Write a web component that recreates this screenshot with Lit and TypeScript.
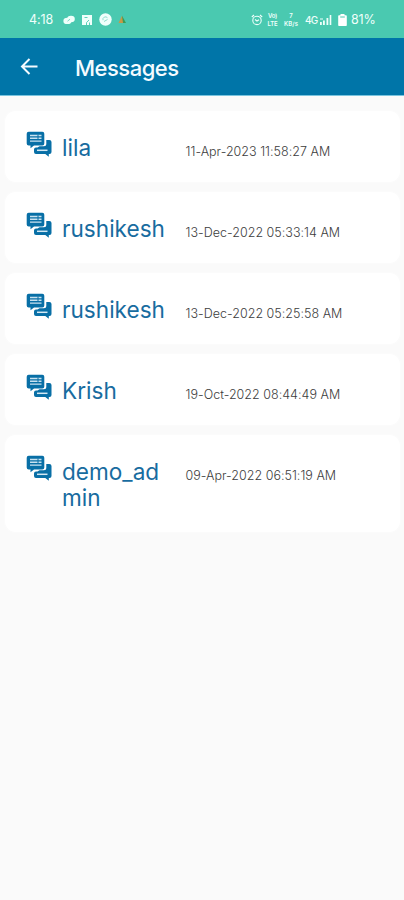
import { LitElement, html, css } from "lit";
import { customElement, property } from "lit/decorators.js";

interface Message {
  name: string;
  date: string;
}

const MESSAGES: Message[] = [
  { name: "lila", date: "11-Apr-2023 11:58:27 AM" },
  { name: "rushikesh", date: "13-Dec-2022 05:33:14 AM" },
  { name: "rushikesh", date: "13-Dec-2022 05:25:58 AM" },
  { name: "Krish", date: "19-Oct-2022 08:44:49 AM" },
  { name: "demo_admin", date: "09-Apr-2022 06:51:19 AM" },
];

@customElement("status-bar")
class StatusBar extends LitElement {
  static styles = css`
    :host {
      display: flex;
      align-items: center;
      justify-content: space-between;
      box-sizing: border-box;
      height: 38px;
      padding: 1px 28px 0 29px;
      background: #4ac9b0;
      color: #effffb;
      font-size: 12.5px;
      line-height: 16px;
    }
    .group {
      display: flex;
      align-items: center;
    }
    svg {
      display: block;
      flex: none;
    }
    .time {
      width: 34px;
      letter-spacing: -0.1px;
    }
    .left svg {
      margin-right: 6px;
    }
    .stack {
      display: flex;
      flex-direction: column;
      align-items: center;
      font-size: 6px;
      line-height: 8px;
      font-weight: 600;
    }
    .volte {
      width: 11px;
      margin-left: 4px;
      letter-spacing: -0.2px;
    }
    .rate {
      width: 18px;
      margin-left: 4px;
      letter-spacing: 0.1px;
    }
    .net {
      width: 14px;
      margin-left: 5px;
      font-size: 10px;
      font-weight: 500;
      letter-spacing: -0.7px;
    }
    .battery {
      margin: 0 4px 0 6px;
    }
    .pct {
      width: 25px;
      letter-spacing: -0.2px;
    }
  `;

  render() {
    return html`
      <div class="group left">
        <span class="time">4:18</span>
        <svg width="12" height="12" viewBox="0 0 12 12" fill="#effffb">
          <ellipse cx="4.4" cy="6.9" rx="4" ry="3.2" />
          <ellipse cx="8" cy="5" rx="3.8" ry="3.2" />
          <path d="M4.5 7.2l2.5-2" stroke="#4ac9b0" stroke-width=".7" />
        </svg>
        <svg width="12" height="12" viewBox="0 0 12 12">
          <path d="M1 1h10v10H1z" fill="#effffb" />
          <path d="M5.5 11V8.6L8 6M8.500 11V8.500M3.500 3.500h3" stroke="#4ac9b0" fill="none" stroke-width=".9" />
        </svg>
        <svg width="13" height="13" viewBox="0 0 13 13">
          <circle cx="6.5" cy="6.5" r="6.2" fill="#effffb" />
          <path d="M4 7.2a2.6 2.6 0 0 1 4.5-2.4M5 8.5l3.5-2" stroke="#8eddcd" fill="none" />
        </svg>
        <svg width="9" height="9" viewBox="0 0 9 9">
          <path d="M4 .8L8 8H4z" fill="#3b9b55" />
          <path d="M4 .8L.5 8H5z" fill="#c99747" />
        </svg>
      </div>
      <div class="group">
        <svg width="12" height="12" viewBox="0 0 12 12" fill="none" stroke="#effffb" stroke-width="1.1">
          <circle cx="6" cy="6.4" r="4.2" />
          <path d="M.8 3L3 1M11.2 3L9 1M4 5.5l2 1.5 2-1.3" />
        </svg>
        <span class="stack volte"><span>Vo)</span><span>LTE</span></span>
        <span class="stack rate"><span>7</span><span>KB/s</span></span>
        <span class="net">4G</span>
        <svg width="13" height="12" viewBox="0 0 13 12" fill="#effffb">
          <path d="M1 8h1.8v3H1zM4 6.5h1.8V11H4zM7.5 4h1.8v7H7.5zM10.7 1h1.6v10h-1.6zM1 4.5h3v1H1z" />
        </svg>
        <svg class="battery" width="9" height="14" viewBox="0 0 9 14">
          <path d="M2.5 1h4v1.2H8q.8 0 .8.8v9.2q0 .8-.8.8H1q-.8 0-.8-.8V3q0-.8.8-.8h1.5z" fill="#fff" />
          <path d="M2.2 4h4.6" stroke="#4ac9b0" />
        </svg>
        <span class="pct">81%</span>
      </div>
    `;
  }
}

@customElement("message-card")
class MessageCard extends LitElement {
  @property() name = "";
  @property() date = "";

  static styles = css`
    :host {
      display: flex;
      align-items: flex-start;
      box-sizing: border-box;
      min-height: 71px;
      padding: 20px 20px 21px 21px;
      border-radius: 11px;
      background: #fff;
      box-shadow: 0 0 3px rgba(255, 255, 255, 0.9);
    }
    svg {
      flex: none;
      display: block;
    }
    .text {
      display: flex;
      align-items: baseline;
      margin-left: 10px;
      padding-top: 4px;
    }
    .name {
      width: 108px;
      margin-right: 15.5px;
      font-size: 22.6px;
      line-height: 26px;
      color: #186c9f;
      word-break: break-all;
    }
    .date {
      font-size: 12.5px;
      line-height: 16px;
      font-weight: 300;
      letter-spacing: 0.02px;
      color: #3c3c3c;
      white-space: nowrap;
    }
  `;

  render() {
    return html`
      <svg width="26" height="26" viewBox="0 0 26 26">
        <path
          d="M2.7 .8h13.600q2 0 2 2v9.700q0 2-2 2H8L4.500 17.200V14.500H2.700q-2 0-2-2V2.800q0-2 2-2z"
          fill="#086fa6"
        />
        <path d="M4 4.500h11.500M4 7.300h11.500M4 10.100h11.500" stroke="#c9e2f0" stroke-width="1.400" />
        <path d="M12 3.500v5" stroke="#086fa6" />
        <path
          d="M20.300 9h3q2.200 0 2.200 2v10q0 2-2 2h-.7V25.700L19.300 23H10q-2 0-2-2v-2.500q0-2 2-2h1.500l2-1.200h4.500q2.300 0 2.300-2z"
          fill="#086fa6"
        />
        <path d="M11 19.300h10.500" stroke="#d4e9f4" stroke-width="1.500" />
      </svg>
      <div class="text">
        <span class="name">${this.name}</span>
        <span class="date">${this.date}</span>
      </div>
    `;
  }
}

@customElement("app-root")
class AppRoot extends LitElement {
  static styles = css`
    :host {
      display: flex;
      flex-direction: column;
      min-height: 900px;
      background: #fafafa;
      font-family: Inter, Roboto, sans-serif;
    }
    .toolbar {
      display: flex;
      align-items: center;
      height: 57px;
      padding-left: 20px;
      background: #0075a8;
      border-bottom: 1px solid #79c4de;
      color: #f4fbff;
    }
    h1 {
      margin: 2px 0 0 36px;
      font-size: 22px;
      line-height: 28px;
      font-weight: 450;
      letter-spacing: -0.5px;
    }
    .list {
      display: flex;
      flex-direction: column;
      gap: 10px;
      padding: 15px 4px 0 5px;
    }
  `;

  render() {
    return html`
      <status-bar></status-bar>
      <header class="toolbar">
        <svg width="19" height="19" viewBox="0 0 19 19" fill="none" stroke="#f4fbff" stroke-width="2">
          <path d="M17.5 9.5H2.5M9.5 2L2 9.5 9.5 17" />
        </svg>
        <h1>Messages</h1>
      </header>
      <main class="list">
        ${MESSAGES.map((m) => html`<message-card .name=${m.name} .date=${m.date}></message-card>`)}
      </main>
    `;
  }
}
